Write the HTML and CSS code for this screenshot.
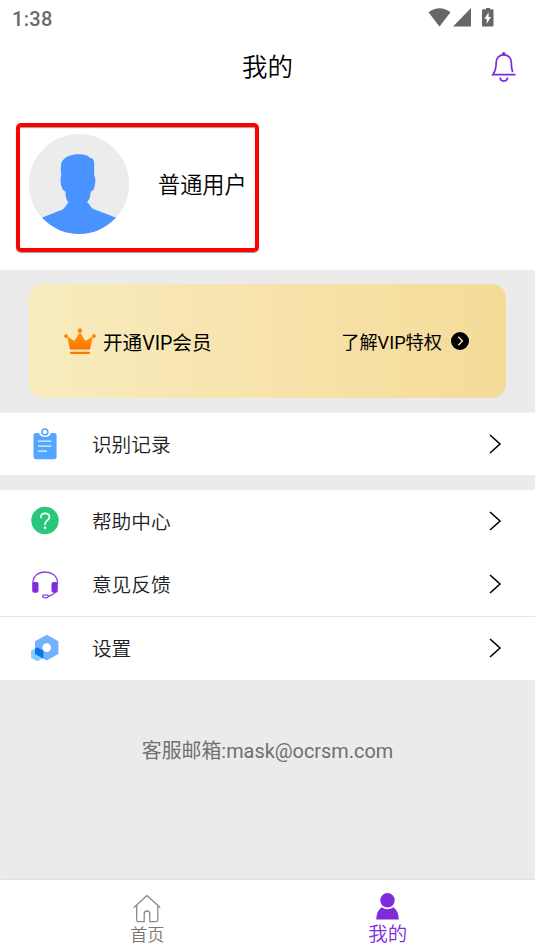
FILE: index.html
```html
<!DOCTYPE html>
<html lang="zh-CN">
<head>
<meta charset="utf-8">
<title>我的</title>
<link rel="stylesheet" href="styles.css">
</head>
<body>
<div class="status">
  <span class="clock">1:38</span>
  <svg class="status-icons" width="68" height="20" viewBox="0 0 68 20" fill="#666">
    <path d="M0.5 4.2Q11.5-3.6 22.5 4.2L11.5 18.5Z"/>
    <path d="M43 0V18.6H25Z"/>
    <path d="M56 1.2H58V0H62V1.2H64.3Q65.500 1.200 65.500 2.400V17.300Q65.500 18.500 64.300 18.500H55.200Q54 18.500 54 17.300V2.400Q54 1.200 55.200 1.200Z"/>
    <path d="M60.600 4.200V9H63L58.700 15.800V10.800H56.400Z" fill="#fff"/>
  </svg>
</div>
<header class="header">
  <h1 class="title">我的</h1>
  <svg class="bell" width="26" height="32" viewBox="0 0 26 32" fill="none" stroke="#7a2bdc" stroke-width="1.700" stroke-linecap="round">
    <circle cx="12.700" cy="2.800" r="1.800" fill="#7a2bdc" stroke="none"/>
    <path d="M21.500 20.500C20.500 17.500 20.300 15 20.300 11.500C20.300 7 17 3.800 12.700 3.800S5.200 7 5.200 11.500C5.200 17.500 4.500 20 1.800 23.700H23.800"/>
    <path d="M9.200 27C9.600 31.100 16 31.100 16.400 27"/>
  </svg>
</header>
<section class="profile">
  <div class="profile-box">
    <svg class="avatar" width="100" height="100" viewBox="0 0 100 100">
      <clipPath id="disc"><circle cx="50" cy="50" r="50"/></clipPath>
      <g clip-path="url(#disc)">
        <rect width="100" height="100" fill="#ececec"/>
        <path fill="#4893ff" d="M50 20.300C56 20.300 59 21.500 61 24C64.500 24 65.300 27 65.200 31V42C66.500 43 66.700 47 66 50C65.500 54 64.500 57 61.700 57.500C61.500 61 61 63.500 60.300 65C59 67 58 67.500 58.500 68.800C61 70 62 74.500 65 75.300L88 84V101H12V84L33 75.800C36 74.500 37.500 70 39.400 68.500C38 66.500 36.500 65 36.500 57.500C33.500 56.500 32.500 53 31.700 49.500C31.500 46 31.500 43 32.300 41.800C31.700 38 31.500 33 32.500 28.500C35 22.500 43 20.300 50 20.300Z"/>
      </g>
    </svg>
    <span class="name">普通用户</span>
  </div>
</section>
<section class="vip-area">
  <div class="vip">
    <svg class="crown" width="32" height="27" viewBox="0 0 32 27">
      <linearGradient id="orange" x2="0" y2="1"><stop stop-color="#ff9b16"/><stop offset="1" stop-color="#ff7200"/></linearGradient>
      <g fill="url(#orange)">
        <path d="M3.200 8.500L9.500 12.500Q10.500 13 11 12L15.900 3.500L20.700 12Q21.200 13 22.200 12.500L28.800 8.500L26 21.500H6Z"/>
        <circle cx="15.900" cy="2.400" r="2.200"/><circle cx="2.100" cy="8.100" r="2"/><circle cx="29.900" cy="8.100" r="2"/>
      </g>
      <rect x="6" y="23.700" width="20" height="2.300" rx=".7" fill="#ff7800"/>
    </svg>
    <span class="vip-open">开通VIP会员</span>
    <span class="vip-more">了解VIP特权</span>
    <svg class="go" width="18" height="18" viewBox="0 0 18 18"><circle cx="9" cy="9" r="9"/><path d="M7.300 4.700L11.400 9L7.300 13.300" fill="none" stroke="#f5dda0" stroke-width="1.500"/></svg>
  </div>
</section>
<nav class="group group-first">
  <a class="row">
    <svg class="icon" width="30" height="34" viewBox="0 0 30 34">
      <path fill="#53a6ff" d="M6 6H9Q10 10 15 10T21 6H24Q26.600 6 26.600 8.500V29.800Q26.600 32.200 24 32.200H6Q3.500 32.200 3.500 29.800V8.500Q3.500 6 6 6Z"/>
      <circle cx="14.900" cy="4.900" r="2.900" fill="#fff" stroke="#53a6ff" stroke-width="1.600"/>
      <path d="M8.500 14.200H21M8.500 19.200H21M8.500 24.200H16.500" stroke="#e8f4ff" stroke-width="1.300" stroke-linecap="round"/>
    </svg>
    <span class="label">识别记录</span>
    <svg class="chevron" width="13" height="20" viewBox="0 0 13 20"><path d="M1 1L11 10L1 19"/></svg>
  </a>
</nav>
<nav class="group">
  <a class="row">
    <svg class="icon" width="30" height="34" viewBox="0 0 30 34">
      <circle cx="15" cy="16.500" r="13.700" fill="#29c77c"/>
      <path d="M10.800 13.500C10.800 8.100 19.500 8.100 19.500 13C19.500 16 15 16.700 15 20.300" fill="none" stroke="#fff" stroke-width="1.700" stroke-linecap="round"/>
      <circle cx="15" cy="23.700" r="1.300" fill="#fff"/>
    </svg>
    <span class="label">帮助中心</span>
    <svg class="chevron" width="13" height="20" viewBox="0 0 13 20"><path d="M1 1L11 10L1 19"/></svg>
  </a>
  <a class="row">
    <svg class="icon" width="30" height="34" viewBox="0 0 30 34">
      <path d="M3 17V15.500C3 9 8.500 5 15 5S27.500 9 27.500 15.500V17M26 24C24.500 27 22 28.500 18.500 29" fill="none" stroke="#8b43e4" stroke-width="1.300"/>
      <rect x="2.200" y="15" width="6.300" height="10.800" rx="2" fill="#832be0"/><rect x="21.500" y="15" width="6.300" height="10.800" rx="2" fill="#832be0"/>
      <ellipse cx="15.500" cy="29.300" rx="2.900" ry="1.500" fill="#fff" stroke="#8b43e4" stroke-width="1.300"/>
    </svg>
    <span class="label">意见反馈</span>
    <svg class="chevron" width="13" height="20" viewBox="0 0 13 20"><path d="M1 1L11 10L1 19"/></svg>
  </a>
  <a class="row row-line">
    <svg class="icon" width="30" height="34" viewBox="0 0 30 34">
      <path d="M16.700 3.700L28.400 10.300V23L16.700 29.500L5 23V10.300Z" fill="#73b2ff"/>
      <path d="M7.300 16.200L13.500 19.700V26.800L7.300 30.300L1.100 26.800V19.700Z" fill="#80d0ff"/>
      <path d="M7.300 16.200L13.500 19.700V27.700L5 23V17.500Z" fill="#1173e5"/>
      <circle cx="16.700" cy="16.600" r="4.300" fill="#fff"/>
    </svg>
    <span class="label">设置</span>
    <svg class="chevron" width="13" height="20" viewBox="0 0 13 20"><path d="M1 1L11 10L1 19"/></svg>
  </a>
</nav>
<p class="mail">客服邮箱:mask@ocrsm.com</p>
<footer class="tabs">
  <a class="tab">
    <svg class="tab-icon" width="28" height="30" viewBox="0 0 28 30" fill="none" stroke="#8a8a8a" stroke-width="1.300" stroke-linecap="round" stroke-linejoin="round"><path d="M1.200 14.200L14 2.500L26.800 14.200M3.700 12.500V27Q3.700 28.700 5.500 28.700H11.200V21Q11.200 18 14 18T16.800 21V28.700H23Q24.800 28.700 24.800 27V12.500"/></svg>
    <span class="tab-home">首页</span>
  </a>
  <a class="tab tab-active">
    <svg class="tab-icon" width="28" height="30" viewBox="0 0 28 30" fill="#7f2bdc"><circle cx="13.500" cy="7.300" r="7.200"/><path d="M7.700 14.200Q13.500 18.200 19.300 14.200Q24.600 17.500 24.800 26.400H2.200Q2.500 17.500 7.700 14.200Z"/></svg>
    <span class="tab-mine">我的</span>
  </a>
</footer>
</body>
</html>
```
FILE: styles.css
```css
* { box-sizing: border-box; }
body {
  margin: 0;
  width: 535px;
  height: 951px;
  display: flex;
  flex-direction: column;
  overflow: hidden;
  background: #ebebeb;
  color: #000;
  font-family: Roboto, "Noto Sans CJK SC", sans-serif;
}
svg { flex: none; display: block; }
.status {
  height: 37px;
  display: flex;
  justify-content: space-between;
  padding: 8px 39px 0 12px;
  background: #fff;
}
.clock { font-size: 20px; line-height: 22px; font-weight: 500; color: #6a6a6a; letter-spacing: .3px; }
.header {
  height: 60px;
  display: grid;
  grid-template-columns: 1fr auto 1fr;
  align-items: center;
  padding: 0 18px;
  background: #fff;
}
.title { grid-column: 2; margin: 0; font-size: 25.500px; line-height: 38px; font-weight: 350; }
.bell { justify-self: end; }
.profile { height: 173px; padding: 26px 16px 0; background: #fff; }
.profile-box {
  width: 243px;
  height: 129px;
  display: flex;
  padding: 7px 9px;
  border: 4px solid #fe0000;
  border-radius: 5px;
  box-shadow: 0 1px 1px rgba(0, 0, 0, .4), inset 0 1px 1px rgba(0, 0, 0, .4);
}
.name { margin: 34px 0 0 29px; font-size: 22.200px; line-height: 34px; font-weight: 350; white-space: nowrap; }
.vip-area { height: 142px; padding: 14px 29px 0; }
.vip {
  height: 114px;
  display: flex;
  align-items: center;
  padding: 0 37px 0 35px;
  border-radius: 14px;
  background: linear-gradient(90deg, #f8ecbf, #f7e3ab 50%, #f4db98);
}
.vip-open { margin-left: 7px; font-size: 19.600px; }
.vip-more { margin: 0 9px 0 auto; font-size: 18.200px; }
.group { background: #fff; }
.group-first { height: 63px; margin-bottom: 15px; border-top: 1px solid #f5f5f5; }
.row { height: 63px; display: flex; align-items: center; padding: 0 33px 0 30.400px; }
.icon, .chevron { margin-top: -2px; }
.group .row-line { box-sizing: content-box; border-top: 1px solid #e5e5e5; }
.label { margin: 2px 0 0 31.500px; font-size: 19.700px; line-height: 30px; font-weight: 350; color: #222; }
.chevron { margin-left: auto; fill: none; stroke: #000; stroke-width: 1.600; }
.mail { margin: 57px 0 0; text-align: center; font-size: 19.900px; line-height: 30px; color: #707070; }
.tabs {
  height: 71px;
  margin-top: auto;
  display: flex;
  padding: 0 27px;
  background: #fff;
  box-shadow: 0 -1px 2px rgba(0, 0, 0, .06);
}
.tab { flex: 1; display: flex; flex-direction: column; align-items: center; padding-top: 13px; color: #777; }
.tab-home { font-size: 17px; line-height: 24px; font-weight: 350; }
.tab-mine { font-size: 19.500px; line-height: 24px; font-weight: 350; color: #7f2bdc; }
```
